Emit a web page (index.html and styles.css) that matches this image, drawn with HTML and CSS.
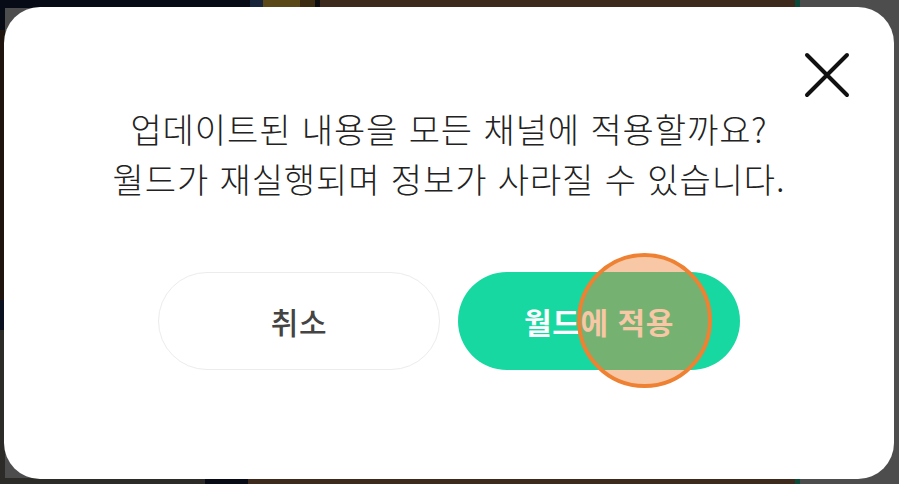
FILE: index.html
```html
<!DOCTYPE html>
<html lang="ko">
<head>
<meta charset="utf-8">
<title>월드에 적용</title>
<link rel="stylesheet" href="styles.css">
</head>
<body>
<div class="modal">
  <button class="close" aria-label="닫기">
    <svg width="46" height="46" viewBox="0 0 46 46"><path d="M3 3L43 43M43 3L3 43" stroke="#111" stroke-width="4" stroke-linecap="round" fill="none"/></svg>
  </button>
  <p class="message">업데이트된 내용을 모든 채널에 적용할까요?<br>월드가 재실행되며 정보가 사라질 수 있습니다.</p>
  <div class="actions">
    <button class="btn btn-cancel">취소</button>
    <button class="btn btn-apply">월드에 적용</button>
  </div>
  <div class="tap"></div>
</div>
</body>
</html>
```
FILE: styles.css
```css
html, body {
  margin: 0;
  padding: 0;
}
body {
  width: 899px;
  height: 484px;
  overflow: hidden;
  font-family: "Noto Sans CJK KR", "Noto Sans", sans-serif;
  background:
    linear-gradient(to right, #070b15 0 250px, #17243a 250px 263px, #5a4816 263px 300px, #3b2b10 300px 315px, #0d0d0d 315px 320px, #3e2a1c 320px 795px, #0c4a3a 795px 800px, #4d4d4d 800px) top / 100% 8px no-repeat,
    linear-gradient(to right, #2d2b27 0 205px, #070b15 205px 248px, #3e2a1c 248px 795px, #0c4a3a 795px 800px, #4d4d4d 800px) bottom / 100% 6px no-repeat,
    linear-gradient(to bottom, #070b15 0 30px, #1f150e 30px 300px, #0b1020 300px 330px, #2d2b27 330px) left / 5px 100% no-repeat,
    #4d4d4d;
}
.modal {
  position: relative;
  box-sizing: border-box;
  margin: 7px 0 0 4px;
  width: 890px;
  height: 472px;
  background: #fff;
  border-radius: 36px;
  display: flex;
  flex-direction: column;
  align-items: center;
}
.close {
  position: absolute;
  top: 45px;
  right: 44px;
  width: 46px;
  height: 46px;
  padding: 0;
  border: 0;
  background: none;
  display: flex;
}
.message {
  margin: 97px 0 0;
  font-size: 34px;
  font-weight: 300;
  line-height: 50px;
  color: #222;
  text-align: center;
  letter-spacing: 0.9px;
}
.actions {
  margin-top: 68px;
  display: flex;
  gap: 18px;
}
.btn {
  box-sizing: border-box;
  width: 282px;
  height: 98px;
  border-radius: 49px;
  font-family: inherit;
  font-size: 30px;
  letter-spacing: 0.6px;
  display: flex;
  align-items: center;
  justify-content: center;
  padding: 0;
}
.btn-cancel {
  background: #fff;
  border: 1.5px solid #ececec;
  color: #444;
  font-weight: 500;
}
.btn-apply {
  background: #17d8a0;
  border: 0;
  color: #fff;
  font-weight: 700;
}
.tap {
  position: absolute;
  left: 573px;
  top: 246px;
  width: 127px;
  height: 127px;
  border-radius: 50%;
  border: 4px solid #ee8132;
  background: rgba(238, 128, 52, 0.44);
}
```
